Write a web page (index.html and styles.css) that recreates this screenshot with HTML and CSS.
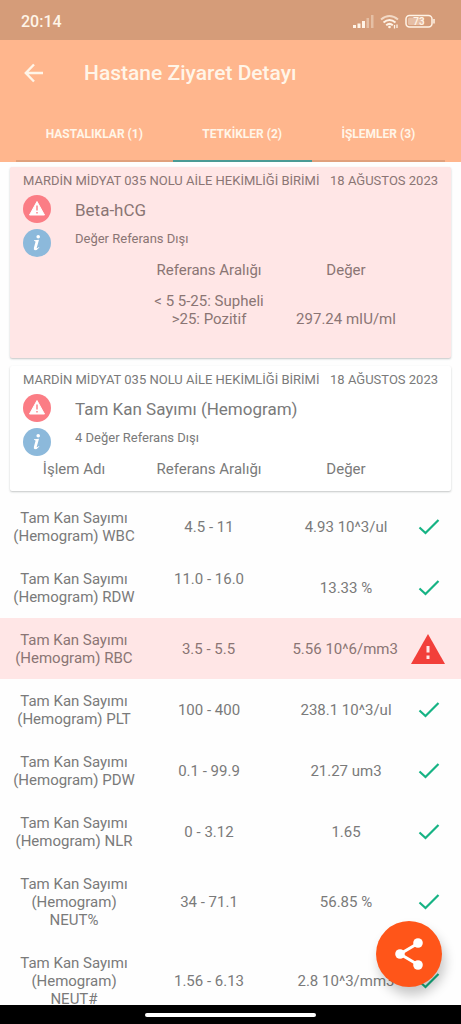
FILE: index.html
```html
<!DOCTYPE html>
<html lang="tr">
<head>
<meta charset="utf-8">
<meta name="viewport" content="width=device-width, initial-scale=1">
<title>Hastane Ziyaret Detayı</title>
<link rel="stylesheet" href="styles.css">
</head>
<body>
<svg width="0" height="0" class="symbols" aria-hidden="true">
  <symbol id="check" viewBox="0 0 22 18"><path d="M1.5 9.5 L7.5 15 L20.5 2" fill="none" stroke="#16b384" stroke-width="2.2"/></symbol>
  <symbol id="alert" viewBox="0 0 28 28"><circle cx="14" cy="14" r="14" fill="#fb7d85"/><path d="M14 6.5 L21.5 20 H6.500 Z" fill="#fff" stroke="#fff" stroke-width="1" stroke-linejoin="round"/><path d="M14 10.500 V15.500 M14 17 V18.500" stroke="#fb7d85" stroke-width="1.400"/></symbol>
  <symbol id="info" viewBox="0 0 28 28"><circle cx="14" cy="14" r="14" fill="#8cb9db"/><circle cx="15.200" cy="7.800" r="1.800" fill="#fff"/><path d="M11 11.300 L16 10.800 L13.700 19 Q13.600 20 16 17.900 L16.300 18.400 Q14 21.300 12 21.300 Q10.300 21 10.900 18.800 L12.500 13 Q12.600 12 11 12.100 Z" fill="#fff"/></symbol>
</svg>

<header class="top">
  <div class="status">
    <span class="time">20:14</span>
    <svg class="status-icons" width="82" height="16" viewBox="0 0 82 16" aria-hidden="true">
      <g fill="#fff3e6"><rect x="0" y="11" width="3" height="3"/><rect x="4.500" y="9.500" width="3" height="4.500"/><rect x="9" y="7" width="3" height="7"/></g>
      <g fill="#fff3e6" opacity=".4"><rect x="13.500" y="4" width="2.500" height="10"/><rect x="18" y="1" width="2.500" height="13"/></g>
      <g fill="none" stroke="#fff3e6" stroke-width="2"><path d="M28 5.500 Q36.500 -1.500 45 5.500" opacity=".7"/><path d="M30.500 8.500 Q36.500 3.500 42.500 8.500"/><path d="M33.200 11.200 Q36.500 8.500 39.800 11.200"/></g>
      <circle cx="36.500" cy="13" r="1.300" fill="#fff3e6"/>
      <path d="M41.500 11 V14.500 M44 10.500 V14" stroke="#fff3e6" stroke-width="1.300"/>
      <rect x="53" y="1.500" width="26" height="11.500" rx="3.500" fill="none" stroke="#fff3e6" stroke-width="1.500"/>
      <rect x="55" y="3.500" width="16" height="7.500" rx="1.500" fill="#fff3e6" opacity=".4"/>
      <path d="M81 5 V9.500" stroke="#fff3e6" stroke-width="1.500"/>
      <text x="66" y="11" text-anchor="middle" class="battery">73</text>
    </svg>
  </div>
  <div class="appbar">
    <button class="back" aria-label="Geri">
      <svg width="20" height="20" viewBox="0 0 20 20"><path d="M19 10 H2 M10 1.500 L1.800 10 L10 18.500" fill="none" stroke="currentColor" stroke-width="2.400"/></svg>
    </button>
    <h1>Hastane Ziyaret Detayı</h1>
  </div>
  <nav class="tabs">
    <button class="tab">HASTALIKLAR (1)</button>
    <button class="tab active">TETKİKLER (2)</button>
    <button class="tab">İŞLEMLER (3)</button>
  </nav>
</header>

<main>
  <section class="card bad">
    <div class="meta"><span>MARDİN MİDYAT 035 NOLU AİLE HEKİMLİĞİ BİRİMİ</span><span>18 AĞUSTOS 2023</span></div>
    <div class="summary">
      <div class="badges"><svg><use href="#alert"/></svg><svg><use href="#info"/></svg></div>
      <div><h2>Beta-hCG</h2><p>Değer Referans Dışı</p></div>
    </div>
    <table>
      <thead><tr class="row head"><th></th><th>Referans Aralığı</th><th>Değer</th></tr></thead>
      <tbody><tr class="row single"><td></td><td>&lt; 5 5-25: Supheli<br>&gt;25: Pozitif</td><td>297.24 mIU/ml</td></tr></tbody>
    </table>
  </section>

  <section class="card">
    <div class="meta"><span>MARDİN MİDYAT 035 NOLU AİLE HEKİMLİĞİ BİRİMİ</span><span>18 AĞUSTOS 2023</span></div>
    <div class="summary">
      <div class="badges"><svg><use href="#alert"/></svg><svg><use href="#info"/></svg></div>
      <div><h2>Tam Kan Sayımı (Hemogram)</h2><p>4 Değer Referans Dışı</p></div>
    </div>
    <div class="row head"><span>İşlem Adı</span><span>Referans Aralığı</span><span>Değer</span></div>
  </section>

  <table class="results">
    <tbody>
      <tr class="row"><td>Tam Kan Sayımı (Hemogram) WBC</td><td>4.5 - 11</td><td>4.93 10^3/ul</td><td><svg class="check"><use href="#check"/></svg></td></tr>
      <tr class="row"><td>Tam Kan Sayımı (Hemogram) RDW</td><td>11.0 - 16.0<br>&nbsp;</td><td>13.33 %</td><td><svg class="check"><use href="#check"/></svg></td></tr>
      <tr class="row bad"><td>Tam Kan Sayımı (Hemogram) RBC</td><td>3.5 - 5.5</td><td>5.56 10^6/mm3</td><td><svg class="warn" viewBox="0 0 34 30"><path d="M17 0 L34 30 H0 Z" fill="#f23f3a"/><path d="M17 12 V18.500 M17 21.500 V25" stroke="#ffe5e5" stroke-width="3"/></svg></td></tr>
      <tr class="row"><td>Tam Kan Sayımı (Hemogram) PLT</td><td>100 - 400</td><td>238.1 10^3/ul</td><td><svg class="check"><use href="#check"/></svg></td></tr>
      <tr class="row"><td>Tam Kan Sayımı (Hemogram) PDW</td><td>0.1 - 99.9</td><td>21.27 um3</td><td><svg class="check"><use href="#check"/></svg></td></tr>
      <tr class="row"><td>Tam Kan Sayımı (Hemogram) NLR</td><td>0 - 3.12</td><td>1.65</td><td><svg class="check"><use href="#check"/></svg></td></tr>
      <tr class="row"><td>Tam Kan Sayımı (Hemogram) NEUT%</td><td>34 - 71.1</td><td>56.85 %</td><td><svg class="check"><use href="#check"/></svg></td></tr>
      <tr class="row"><td>Tam Kan Sayımı (Hemogram) NEUT#</td><td>1.56 - 6.13</td><td>2.8 10^3/mm3</td><td><svg class="check"><use href="#check"/></svg></td></tr>
    </tbody>
  </table>

  <button class="share" aria-label="Paylaş">
    <svg width="28" height="32" viewBox="0 0 28 32"><path d="M23.500 5 L5 16 L23.500 27" fill="none" stroke="#fff" stroke-width="3"/><circle cx="23" cy="5" r="4.800" fill="#fff"/><circle cx="5" cy="16" r="4.800" fill="#fff"/><circle cx="23" cy="27" r="4.800" fill="#fff"/></svg>
  </button>
</main>
<footer class="navbar"><div class="pill"></div></footer>
</body>
</html>
```

FILE: styles.css
```css
* { box-sizing: border-box; }

body {
  margin: 0;
  height: 100vh;
  display: flex;
  flex-direction: column;
  background: #fefefe;
  color: #7a7a7a;
  font: 15px/18px Roboto, "Noto Sans", sans-serif;
}

.symbols { position: absolute; }
h1, h2, p { margin: 0; font-weight: 400; }
button { border: 0; padding: 0; background: none; color: inherit; font: inherit; }

.top { background: #ffb68d; color: #fff5e8; }

.status {
  height: 40px;
  padding: 4px 26px 0 21px;
  display: flex;
  align-items: center;
  justify-content: space-between;
  background: #d59c79;
}
.time { font-size: 16px; font-weight: 500; }
.battery { font-size: 10px; font-weight: 500; fill: #fff3e6; }

.appbar {
  height: 66px;
  padding: 0 24px;
  display: flex;
  align-items: center;
  gap: 40px;
}
.back { display: flex; }
h1 { font-size: 21px; line-height: 28px; font-weight: 500; }

.tabs { display: flex; margin: 0 16px; }
.tab {
  flex: 1 1 auto;
  height: 56px;
  padding-top: 2px;
  border-bottom: 2px solid #e0a17d;
  font-size: 12px;
  font-weight: 700;
}
.tab.active { border-color: #4a9a95; }

main {
  flex: 1;
  min-height: 0;
  position: relative;
  overflow: hidden;
  padding-top: 5px;
}

.card {
  margin: 0 10px 8px;
  padding-top: 5px;
  border-radius: 2px;
  background: #fff;
  box-shadow: 0 1px 2px rgba(60, 70, 70, .3);
}
.bad { background: #ffe6e6; color: #8a7574; }
.card + .card { margin-bottom: 5px; }

.meta {
  display: flex;
  justify-content: space-between;
  padding: 0 13px;
  font-size: 13px;
}
.summary {
  display: flex;
  gap: 24px;
  padding: 5px 13px 4px;
}
.badges { display: flex; flex-direction: column; gap: 6px; }
.badges svg { width: 28px; height: 28px; }
h2 { font-size: 17px; line-height: 30px; }
p { font-size: 13px; line-height: 28px; }

table, thead, tbody { display: block; }
th, td { padding: 0; font-weight: 400; }

.row {
  display: grid;
  grid-template-columns: 128fr 142fr 132fr 39fr;
  align-items: center;
  text-align: center;
}
.head { min-height: 18px; }
.card > .head { padding-bottom: 13px; }
.single { align-items: end; padding: 13px 0 30px; }

.results .row { padding: 13px 10px 12px; }
.results td:last-child { display: flex; height: 30px; align-items: center; margin-right: 6px; justify-content: center; }
.check { width: 22px; height: 18px; }
.warn { width: 34px; height: 30px; flex: none; }

.share {
  position: absolute;
  right: 19px;
  bottom: 18px;
  width: 66px;
  height: 66px;
  border-radius: 50%;
  display: grid;
  place-items: center;
  background: #ff5519;
  box-shadow: 3px 8px 12px rgba(0, 0, 0, .22);
}

.navbar {
  height: 19px;
  flex: none;
  display: grid;
  place-items: center;
  background: #000;
}
.pill { width: 37%; height: 4px; border-radius: 2px; background: #fff; }
```
